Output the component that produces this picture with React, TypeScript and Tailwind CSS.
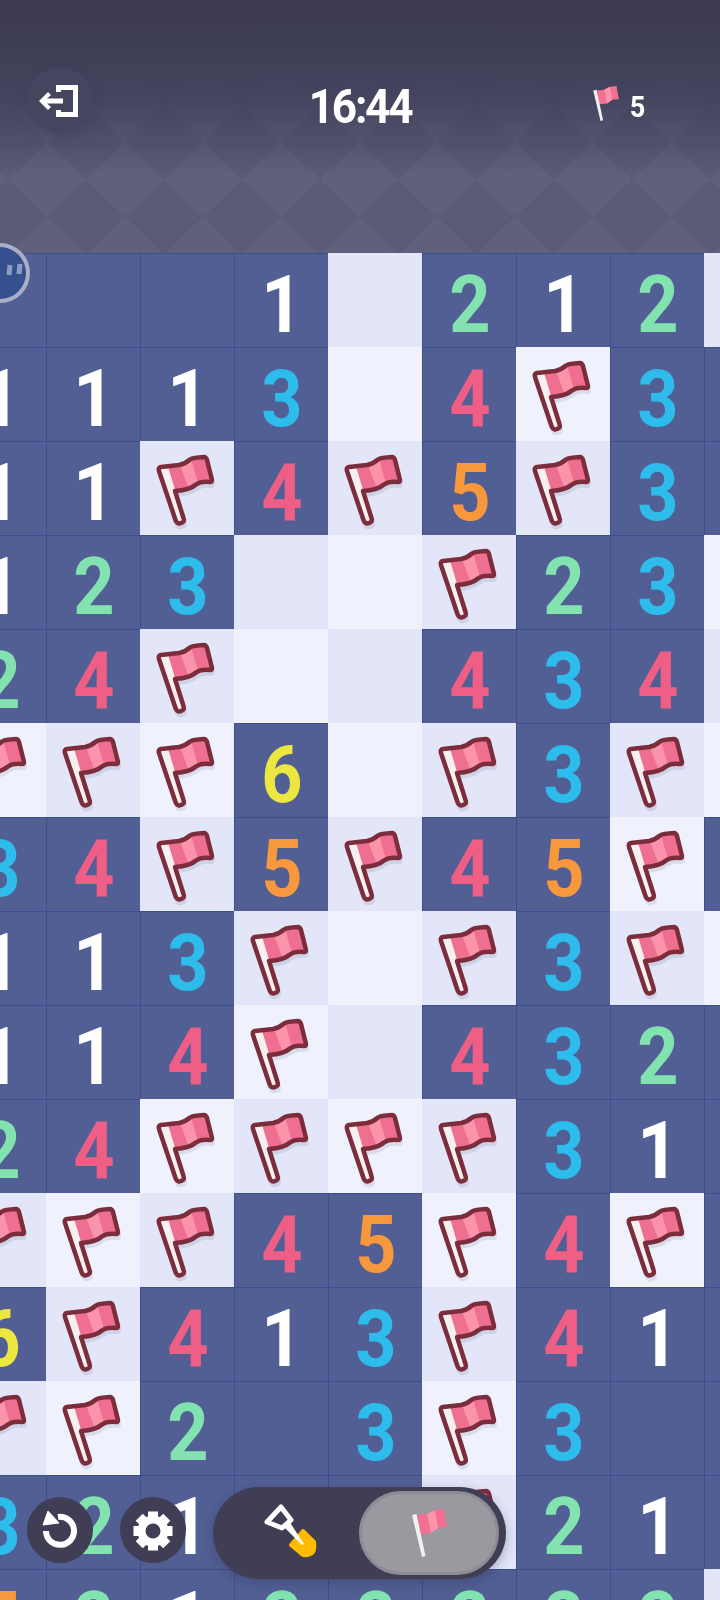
const grid = [
  ["_", "_", "_", "1", ".", "2", "1", "2", "."],
  ["1", "1", "1", "3", ".", "4", "f", "3", "_"],
  ["1", "1", "f", "4", "f", "5", "f", "3", "_"],
  ["1", "2", "3", ".", ".", "f", "2", "3", "."],
  ["2", "4", "f", ".", ".", "4", "3", "4", "."],
  ["f", "f", "f", "6", ".", "f", "3", "f", "."],
  ["3", "4", "f", "5", "f", "4", "5", "f", "_"],
  ["1", "1", "3", "f", ".", "f", "3", "f", "."],
  ["1", "1", "4", "f", ".", "4", "3", "2", "_"],
  ["2", "4", "f", "f", "f", "f", "3", "1", "_"],
  ["f", "f", "f", "4", "5", "f", "4", "f", "_"],
  ["6", "f", "4", "1", "3", "f", "4", "1", "_"],
  ["f", "f", "2", "_", "3", "f", "3", "_", "_"],
  ["3", "2", "1", "_", "_", "f", "2", "1", "_"],
  ["5", "2", "1", "2", "2", "2", "2", "2", "."],
];

const digitColors: Record<string, string> = {
  "1": "text-white",
  "2": "text-[#83e3b0]",
  "3": "text-[#2ebcec]",
  "4": "text-[#ef5f85]",
  "5": "text-[#f7983c]",
  "6": "text-[#ece640]",
};

function BigFlag() {
  const cloth = "M21 26 L39 24 Q45 23 50 18.5 Q53 16.5 64 16 Q66 16 67 19 L72 39 Q72 41 70 41 Q61 40 56 43.5 Q50 49 35 50";
  const outline = `${cloth} L43.5 77 Q45 81 41 82 Q37 83.5 35.5 79 L19 30 Q18 26.5 21 26 Z`;
  return (
    <svg viewBox="0 0 94 94" className="w-[94px] h-[94px]">
      <path d={outline} transform="translate(1 4)" fill="#1e2a5a" opacity="0.1" stroke="#1e2a5a" strokeWidth="4" strokeLinejoin="round" />
      <path d={`${cloth} Z`} fill="#ef6f90" />
      <path d="M40 24 Q45 23 51 18 L58 42 Q53 46 49 48 Z" fill="#fb93ab" />
      <path d="M21 26 L28 25.5 L43.5 77 Q45 81 41 82 Q37 83.5 35.5 79 L19 30 Z" fill="#f7f0f0" />
      <path d={outline} fill="none" stroke="#7b2d3b" strokeWidth="4.5" strokeLinejoin="round" />
    </svg>
  );
}

function PlainFlag({ className }: { className: string }) {
  return (
    <svg viewBox="0 0 35 48" className={className}>
      <path d="M5 6 L15 5 L23 1 L32 0 L35 18 L26 19 L19 24 L8 25 Z" fill="#f26f92" />
      <path d="M15 5 L23 1 L26 19 L19 24 Z" fill="#fb93ab" />
      <path d="M0 6 L4.5 5 L13.5 47 L10 48 Z" fill="#f3f0f0" />
    </svg>
  );
}

function Cell({ value, row, col }: { value: string; row: number; col: number }) {
  if (value === "." || value === "f") {
    const shade = (row + col) % 2 === 0 ? "bg-[#e2e6f8]" : "bg-[#eff2fd]";
    return <div className={`h-[94px] ${shade}`}>{value === "f" && <BigFlag />}</div>;
  }
  return (
    <div className="h-[94px] flex items-center justify-center bg-[#515f94] border-l border-t border-[#3e4d91]">
      {value !== "_" && (
        <span className={`pt-[9px] text-[80px] leading-none font-bold scale-x-90 ${digitColors[value]}`}>{value}</span>
      )}
    </div>
  );
}

export default function App() {
  return (
    <div className="relative w-[720px] h-[1600px] overflow-hidden bg-[#515f94] font-['Roboto',sans-serif]">
      {/* Header */}
      <div className="relative h-[253px] bg-gradient-to-b from-[#3d3c54] from-10% via-[#46455f] via-40% to-[#5e5e7b] to-70%">
        <svg className="absolute inset-0 w-full h-full" width="720" height="253">
          <defs>
            <pattern id="diamonds" width="78" height="75" patternUnits="userSpaceOnUse" x="8" y="142">
              <path d="M39 0 L78 37.5 L39 75 L0 37.5 Z" fill="#ffffff" opacity="0.015" />
              <path d="M0 0 L39 0 L0 37.5 Z M78 0 L78 37.5 L39 0 Z M0 75 L0 37.5 L39 75 Z M78 75 L39 75 L78 37.5 Z" fill="#000000" opacity="0.03" />
            </pattern>
            <linearGradient id="fade" x1="0" y1="0" x2="0" y2="1">
              <stop offset="0.3" stopColor="#000" />
              <stop offset="0.62" stopColor="#fff" />
            </linearGradient>
            <mask id="fadeMask">
              <rect width="720" height="253" fill="url(#fade)" />
            </mask>
          </defs>
          <rect width="720" height="253" fill="url(#diamonds)" mask="url(#fadeMask)" />
        </svg>

        <div className="relative flex items-center justify-between pt-[67px] pl-[27px] pr-[74px]">
          <button className="w-[66px] h-[66px] rounded-full bg-[#46455f] shadow-[0_4px_14px_rgba(45,45,65,0.2)] flex items-center justify-center">
            <svg viewBox="0 0 39 32" className="w-[39px] h-[32px] mt-[2px] -ml-[4px]">
              <path d="M17 7 V0 H39 V32 H17 V25 H22 V27 H34 V5 H22 V7 Z" fill="#fff" />
              <path d="M0 16 L9 7 L12 10 L8 13.5 H24 V18.5 H8 L12 22 L9 25 Z" fill="#fff" />
            </svg>
          </button>
          <div className="absolute left-[300px] top-[82px] w-[120px] text-center text-[49px] leading-[50px] font-bold text-white tracking-[-0.05em] scale-x-90">
            16:44
          </div>
          <div className="flex items-center gap-[10px] pt-[6px]">
            <PlainFlag className="w-[26px] h-[35px]" />
            <span className="mt-[8px] text-[30px] leading-none font-bold text-white scale-x-90">5</span>
          </div>
        </div>
      </div>

      {/* Board */}
      <div className="-ml-[48px] w-[846px] grid grid-cols-[repeat(9,94px)]">
        {grid.map((cells, row) =>
          cells.map((value, col) => <Cell key={`${row}-${col}`} value={value} row={row} col={col} />)
        )}
      </div>

      {/* Floating helper bubble */}
      <div className="absolute -left-[30px] top-[243px] w-[60px] h-[60px] rounded-full bg-[#a9afc6] flex items-center justify-center">
        <div className="relative w-[52px] h-[52px] rounded-full bg-[#36508f]">
          <div className="absolute left-[33px] top-[18px] w-[5px] h-[10px] bg-[#8f9cc0] rotate-[6deg]" />
          <div className="absolute left-[43px] top-[17px] w-[5px] h-[10px] bg-[#8f9cc0] rotate-[6deg]" />
        </div>
      </div>

      {/* Bottom controls */}
      <button className="absolute left-[27px] top-[1497px] w-[66px] h-[66px] rounded-full bg-[#3f3e55] flex items-center justify-center">
        <svg viewBox="0 0 66 66" className="w-[66px] h-[66px]">
          <path d="M31 20 A14 14 0 1 1 19 34" fill="none" stroke="#fff" strokeWidth="6" />
          <path d="M21 14 L16 28 L32 26 Z" fill="#fff" stroke="#fff" strokeWidth="1" strokeLinejoin="round" />
        </svg>
      </button>
      <button className="absolute left-[120px] top-[1497px] w-[66px] h-[66px] rounded-full bg-[#3f3e55] flex items-center justify-center">
        <svg viewBox="0 0 66 66" className="w-[66px] h-[66px]">
          <circle cx="33" cy="34" r="11.5" fill="none" stroke="#fff" strokeWidth="8" />
          {[0, 45, 90, 135, 180, 225, 270, 315].map((a) => (
            <rect key={a} x="28" y="14.5" width="10" height="8" fill="#fff" transform={`rotate(${a} 33 34)`} />
          ))}
        </svg>
      </button>

      <div className="absolute left-[213px] top-[1487px] w-[293px] h-[92px] rounded-full bg-[#3f3e55] shadow-[0_4px_12px_rgba(40,40,70,0.3)] flex items-center justify-between pl-[48px] pr-[7px]">
        <svg viewBox="0 0 60 60" className="w-[60px] h-[60px]">
          <path d="M42 28 L53 39 Q54 46 52 49 Q48 53 42 52 L30 42 Z" fill="#fdbb00" stroke="#fdbb00" strokeWidth="4" strokeLinejoin="round" />
          <path d="M20 4 L30 17 L21 25 L6 19 Z" fill="none" stroke="#fff" strokeWidth="5" strokeLinejoin="round" />
          <path d="M22 23 L28 18 L43 41 L41 42 Z" fill="#fff" />
        </svg>
        <div className="w-[140px] h-[84px] rounded-full bg-[#9a99a0] border-[3px] border-[#8d8c94] flex items-center justify-center">
          <PlainFlag className="w-[35px] h-[48px]" />
        </div>
      </div>
    </div>
  );
}
